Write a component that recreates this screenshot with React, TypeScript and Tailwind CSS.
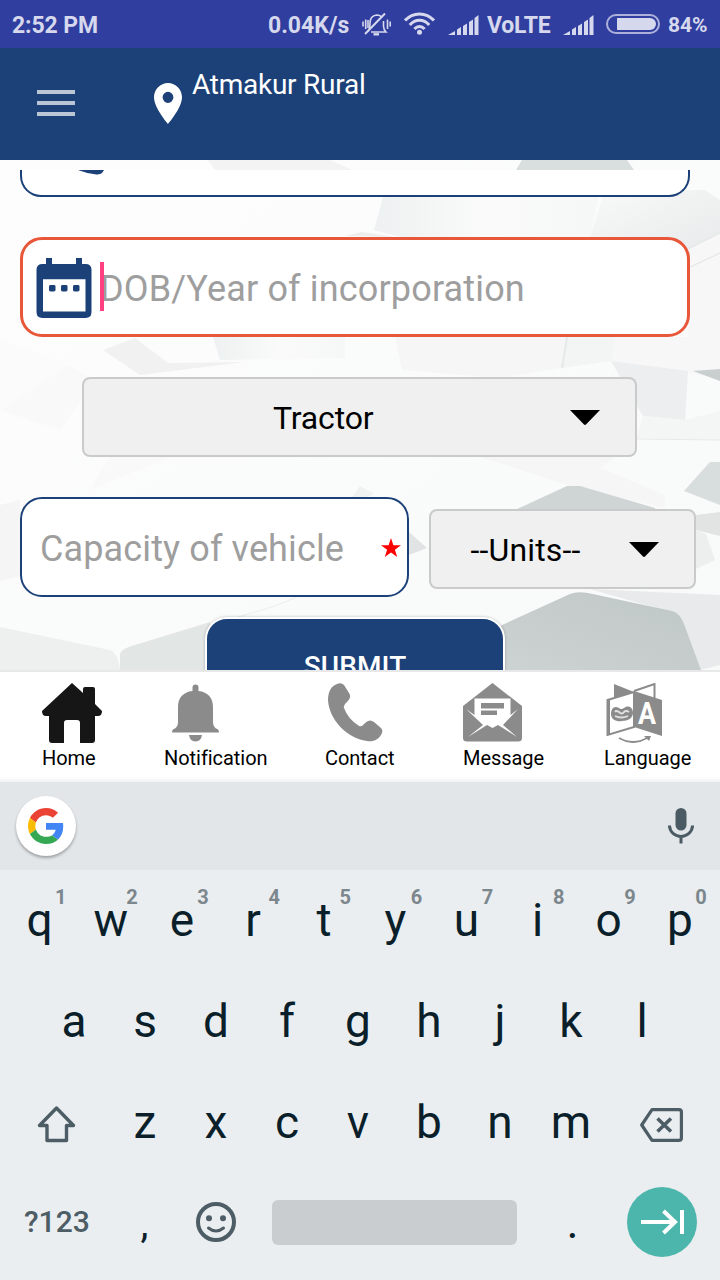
import React from "react";

type Digit = { k: string; n: string };

const topRow: Digit[] = "qwertyuiop".split("").map((k, i) => ({ k, n: String((i + 1) % 10) }));
const midRow = "asdfghjkl".split("");
const lowRow = "zxcvbnm".split("");

function Signal() {
  return (
    <svg className="block h-[20px] w-[31px]" viewBox="0 0 31 20" fill="#d6d8ed">
      <path d="M0 20 L7 16 V20z M9 14.5 l4-2.5 V20H9z M15 11 l4-2.5 V20h-4z M21 7 l4-2.5 V20h-4z M26.500 3 l4-3 V20h-4z" />
    </svg>
  );
}

function StatusBar() {
  return (
    <div className="flex h-[48px] shrink-0 items-center bg-[#303e9f] pt-[2px] pl-[12px] text-[23px] font-bold leading-none text-[#d6d8ed]">
      <span className="w-[256px] whitespace-nowrap tracking-[-0.1px]">2:52 PM</span>
      <span className="w-[94px] whitespace-nowrap">0.04K/s</span>
      <svg className="-mt-[3px] h-[24px] w-[29px] shrink-0" viewBox="0 0 29 24" fill="none" stroke="#d6d8ed" strokeWidth="1.6">
        <path d="M6 19.500 C8 17 8 15 8 11 C8 6 10 3.800 14.500 3 C17 3 19 3.800 20 5.500 M21.500 9 V14 C21.500 17 22 18 24 20 H9" />
        <path d="M3 22 L23 1.500" strokeWidth="2" />
        <path d="M11.500 22.300 H17" strokeWidth="2.400" />
        <path d="M1 9.500 V14.500 M3.700 7.500 V17 M25.500 7.500 V17 M28.200 9.500 V14.500 M6 8 V16" />
      </svg>
      <svg className="ml-[13px] -mt-[4px] h-[23px] w-[31px] shrink-0" viewBox="0 0 31 23" fill="none" stroke="#d6d8ed" strokeWidth="3">
        <path d="M1 8.500 C9 -0.300 22 -0.300 30 8.500" />
        <path d="M5.800 13 C11.500 6.800 19.500 6.800 25.200 13" />
        <path d="M10.400 17 C13.500 13.800 17.500 13.800 20.600 17" />
        <circle cx="15.500" cy="20.300" r="2.500" fill="#d6d8ed" stroke="none" />
      </svg>
      <span className="-mt-px ml-[13px] shrink-0"><Signal /></span>
      <span className="ml-[8px] w-[69px] whitespace-nowrap tracking-[-0.2px]">VoLTE</span>
      <span className="-mt-px ml-[7px] shrink-0"><Signal /></span>
      <div className="-mt-[2px] ml-[12px] flex h-[20px] w-[54px] shrink-0 rounded-full border-2 border-[#aeb2db] p-[2px] pl-[9px]">
        <div className="h-full w-full rounded-r-full bg-[#d6d8ed]" />
      </div>
      <span className="ml-[8px] whitespace-nowrap text-[21px]">84%</span>
    </div>
  );
}

function Header() {
  return (
    <div className="flex h-[112px] shrink-0 items-start bg-[#1b4178] pl-[37px]">
      <div className="mt-[42px] flex w-[38px] flex-col gap-[7px]">
        <div className="h-[4px] bg-[#bac5d6]" />
        <div className="h-[4px] bg-[#bac5d6]" />
        <div className="h-[4px] bg-[#bac5d6]" />
      </div>
      <svg className="ml-[79px] mt-[35px] h-[41px] w-[28px]" viewBox="5 2 14 20" preserveAspectRatio="none" fill="#fff">
        <path d="M12 2C8.130 2 5 5.130 5 9c0 5.250 7 13 7 13s7-7.750 7-13c0-3.870-3.130-7-7-7zm0 9.700a2.700 2.700 0 1 1 0-5.400 2.700 2.700 0 0 1 0 5.400z" />
      </svg>
      <span className="ml-[10px] mt-[23px] whitespace-nowrap text-[28px] leading-[28px] tracking-[-0.25px] text-white">Atmakur Rural</span>
    </div>
  );
}

function Backdrop() {
  return (
    <svg className="absolute inset-0 h-[510px] w-[720px]" viewBox="0 160 720 510">
      <defs>
        <linearGradient id="base" x1="0" y1="0" x2="1" y2="1">
          <stop offset="0" stopColor="#fdfdfd" />
          <stop offset="1" stopColor="#f8f9f9" />
        </linearGradient>
        <linearGradient id="fade" x1="0" y1="0" x2="1" y2="0">
          <stop offset="0" stopColor="#eef1f1" />
          <stop offset="0.500" stopColor="#fafafa" />
          <stop offset="1" stopColor="#f6f7f7" />
        </linearGradient>
        <linearGradient id="rise" x1="0" y1="0" x2="1" y2="1">
          <stop offset="0" stopColor="#f8f9f9" />
          <stop offset="1" stopColor="#e8ebeb" />
        </linearGradient>
        <linearGradient id="stone" x1="1" y1="0" x2="0" y2="1">
          <stop offset="0" stopColor="#bfc7c6" />
          <stop offset="1" stopColor="#cdd2d2" />
        </linearGradient>
      </defs>
      <rect y="160" width="720" height="510" fill="url(#base)" />
      <path d="M208 160H330L352 170H215z" fill="#f3f3f3" />
      <path d="M522 160H627L634 170H516z" fill="#d9dfde" />
      <path d="M385 190H600L590 237H400L374 230z" fill="url(#fade)" />
      <path d="M605 190L705 190L720 200V233L688 249L590 237z" fill="url(#rise)" />
      <path d="M688 249L720 233V253L688 267z" fill="#f7f7f7" />
      <path d="M688 267L720 253V378L611 361L615 337H688z" fill="#f7f7f7" />
      <path d="M688 249L720 233M688 268L720 253" stroke="#e0e3e3" />
      <path d="M345 236L362 232L395 237z" fill="#eceded" />
      <path d="M103 350L135 338L168 363L245 362L140 375z" fill="#f1f1f1" />
      <path d="M213 337L220 360L345 358V337z" fill="url(#fade)" />
      <path d="M395 337H567L562 368L500 378L402 370z" fill="#f6f6f6" />
      <path d="M567 337H615L611 361L562 368z" fill="#f3f4f4" />
      <path d="M567 337L562 368" stroke="#e6e9e9" strokeWidth="2" />
      <path d="M611 361L688 371L685 420L643 416z" fill="#eceeef" />
      <path d="M693 371L720 369V381z" fill="#c9cfcf" />
      <path d="M643 416L685 420L720 411V440L637 438z" fill="#f4f5f5" />
      <path d="M637 439L720 440" stroke="#e7e9e9" />
      <path d="M0 410L68 365L95 380L60 430z M110 457L170 457L90 490z" fill="#f9f9f9" />
      <path d="M0 340L68 365L0 411z" fill="#fbfbfb" />
      <path d="M480 457L637 440L600 468L665 495V508L570 486z" fill="#f6f6f6" />
      <path d="M710 462H720V505L684 491z" fill="#d8dddd" />
      <path d="M515 510L567 486L580 486L655 508V515H515z" fill="#cfd5d5" />
      <path d="M696 515L720 512V536L696 530z" fill="#e2e4e3" />
      <path d="M696 530L706 534L715 560L696 569z" fill="#edefef" />
      <path d="M409 532L427 548L409 555z" fill="#e1e4e4" />
      <path d="M360 486L374 494L368 497H352z" fill="#f0f2f2" />
      <path d="M0 505L20 500V576L0 581z" fill="#f5f5f5" />
      <path d="M590 589L720 595V665L700 670L660 609z" fill="#e8eaeb" />
      <path d="M500 626L570 594Q577 591 588 593L672 611Q680 613 684 624L701 670H500z" fill="url(#stone)" />
      <path d="M0 627L110 650Q118 653 120 670H0z" fill="#eeefef" />
      <path d="M120 670V656Q119 649 135 645L210 622V670z" fill="#e2e6e4" />
      <path d="M238 617L272 607L297 597" stroke="#ededed" fill="none" />
    </svg>
  );
}

function Caret() {
  return (
    <svg className="h-[15px] w-[30px] shrink-0" viewBox="0 0 30 15">
      <path d="M0 0H30L16 14.600Q15 15.400 14 14.600z" fill="#000" />
    </svg>
  );
}

function Form() {
  return (
    <div className="relative h-[510px] shrink-0 overflow-hidden">
      <Backdrop />
      <div className="relative flex flex-col pt-[10px] pl-[20px]">
        <div className="h-[27px] w-[670px] overflow-hidden rounded-b-[21px] border-2 border-t-0 border-[#1b4178] bg-white pl-[56px]">
          <svg className="h-[5px] w-[27px]" viewBox="0 0 27 5">
            <path d="M0 0H26L24 3Q22 5 17 4.300Q9 3.500 0 0z" fill="#1b4178" />
          </svg>
        </div>
        <div className="relative mt-[40px] flex h-[100px] w-[670px] items-center rounded-[22px] border-[3px] border-[#e8573a] bg-white pl-[13px]">
          <svg className="mt-px h-[60px] w-[56px] shrink-0" viewBox="-0.5 0 56 61" preserveAspectRatio="none">
            <path fillRule="evenodd" fill="#1b4178" d="M9.500 0H15.500V6H39.500V0H45.500V6H49Q55 6 55 12V55Q55 61 49 61H6Q0 61 0 55V12Q0 6 6 6H9.500z M6.500 21.500V54.500H49V21.500z" />
            <g fill="#1b4178">
              <rect x="12.500" y="27.500" width="6.500" height="6.500" rx="1.500" />
              <rect x="24.500" y="27.500" width="6.500" height="6.500" rx="1.500" />
              <rect x="36.500" y="27.500" width="6.500" height="6.500" rx="1.500" />
            </g>
          </svg>
          <span className="ml-[8px] mt-[3px] whitespace-nowrap text-[36px] leading-none tracking-[0.16px] text-[#9e9e9e]">DOB/Year of incorporation</span>
          <div className="absolute left-[77px] top-[22px] h-[49px] w-[4px] bg-[#ff4081]" />
        </div>
        <div className="ml-[62px] mt-[40px] flex h-[80px] w-[555px] items-center rounded-[8px] border-2 border-[#cacaca] bg-[#f0f0f0]">
          <span className="ml-[189px] mt-[2px] w-[297px] text-[32px] leading-none tracking-[-0.15px] text-black">Tractor</span>
          <Caret />
        </div>
        <div className="mt-[40px] flex items-start">
          <div className="flex h-[100px] w-[389px] items-center rounded-[22px] border-2 border-[#1b4178] bg-white">
            <span className="ml-[18px] mt-[3px] w-[341px] whitespace-nowrap text-[36px] leading-none tracking-[0.12px] text-[#9e9e9e]">Capacity of vehicle</span>
            <svg className="mt-px h-[19px] w-[20px] shrink-0" viewBox="0 0 20 19">
              <path d="M10 0L12.400 7.200H20L13.900 11.700L16.200 19L10 14.600L3.800 19L6.100 11.700L0 7.200H7.600z" fill="#f00" />
            </svg>
          </div>
          <div className="ml-[20px] mt-[12px] flex h-[80px] w-[267px] items-center rounded-[8px] border-2 border-[#cacaca] bg-[#f0f0f0]">
            <span className="ml-[39.500px] mt-[2px] w-[158.500px] whitespace-nowrap text-[32px] leading-none tracking-[0.15px] text-black">--Units--</span>
            <Caret />
          </div>
        </div>
        <div className="ml-[185px] mt-[20px] flex h-[100px] w-[300px] items-center justify-center rounded-[22px] border-2 border-white bg-[#1b4178] shadow-[0_0_3px_rgba(0,0,0,0.25)]">
          <span className="text-[28px] font-medium leading-none tracking-[0.1px] text-white">SUBMIT</span>
        </div>
      </div>
    </div>
  );
}

function NavItem({ label, className, children }: { label: string; className: string; children: React.ReactNode }) {
  return (
    <div className={"flex flex-col items-start " + className}>
      <div className="h-[60px]">{children}</div>
      <span className="mt-[5px] whitespace-nowrap text-[20px] leading-[20px] tracking-[-0.05px] text-black">{label}</span>
    </div>
  );
}

function NavBar() {
  return (
    <div className="flex h-[112px] shrink-0 border-t-2 border-[#e8e8e8] bg-gradient-to-b from-white from-95% to-[#f2f2f2] pl-[42px] pt-[11px]">
      <NavItem label="Home" className="w-[122px]">
        <svg className="h-[60px] w-[60px]" viewBox="0 0 60 60" fill="#161616">
          <path d="M30 0L41 10V6Q41 4 43 4H51Q53 4 53 6V21L60 28Q60 33 56 33H53V57Q53 60 50 60H38V40Q38 37 35 37H25Q22 37 22 40V60H10Q7 60 7 57V33H4Q0 33 0 28z" />
        </svg>
      </NavItem>
      <NavItem label="Notification" className="w-[161px]">
        <svg className="ml-[8px] h-[60px] w-[47px]" viewBox="0 0 47 60" fill="#8b8b8b">
          <path d="M20.500 8V4.500Q20.500 1.500 23.500 1.500Q26.500 1.500 26.500 4.500V8C36 9 41 15 41 24V39Q41 43 44 45.500Q47 46 47 49.500H0Q0 46 3 45.500Q6 43 6 39V24C6 15 11 9 20.500 8z" />
          <path d="M17 52H30Q29 58.500 23.500 58.500Q18 58.500 17 52z" />
        </svg>
      </NavItem>
      <NavItem label="Contact" className="w-[138px]">
        <svg className="ml-[3px] h-[60px] w-[55px]" viewBox="0 0 55 60" fill="#8b8b8b">
          <path d="M9 1Q13-1 16 2L21 10Q24 15 19 19Q15 22 16 25Q20 36 31 43Q34 44 36 41Q41 35 46 39L53 45Q55 47 54 50C51 57 45 59 39 58C18 55 1 36 0 17C0 9 3 3 9 1z" />
        </svg>
      </NavItem>
      <NavItem label="Message" className="w-[141px]">
        <svg className="h-[60px] w-[59px]" viewBox="0 0 59 60">
          <path d="M29.500 0L59 23V55Q59 58.500 55 58.500H4Q0 58.500 0 55V23z" fill="#8b8b8b" />
          <path d="M11.500 15.500H47.500V32L55 26L40 42L54 54L35 42L29.500 45L24 42L5 54L20 42L3 26L11.500 32z" fill="#fff" />
          <path d="M18 20H41V25.500H18z M18 27.500H34V32H18z" fill="#8b8b8b" />
        </svg>
      </NavItem>
      <NavItem label="Language" className="w-[100px]">
        <svg className="ml-[2px] h-[60px] w-[57px]" viewBox="0 0 57 60">
          <path d="M8 1L28 9V18L8 16z" fill="#8b8b8b" />
          <path d="M28 8L48.500 1V15" fill="none" stroke="#8b8b8b" strokeWidth="2" />
          <path d="M1.500 17L28 9V44L1.500 52z" fill="#fff" stroke="#8b8b8b" strokeWidth="2" />
          <path d="M2.500 16V52" stroke="#8b8b8b" strokeWidth="3" />
          <path d="M28 8L56 17V53L28 44z" fill="#8b8b8b" />
          <text x="32" y="41" fill="#fff" fontFamily="Roboto, sans-serif" fontWeight="700" fontSize="31" textLength="18" lengthAdjust="spacingAndGlyphs">A</text>
          <path d="M13 25C8 22 5 26 5 31C5 37 11 39 16 38C22 38 27 35 27 30C27 24 22 22 18 25Q15 27 13 25z" fill="#8b8b8b" />
          <path d="M9 29Q10 27 13 29Q16 32 18 29Q20 27 23 29M9 33Q15 36 22 33" fill="none" stroke="#e0e0e0" strokeWidth="1.800" />
          <path d="M13 55Q27 63 41 55" fill="none" stroke="#8b8b8b" strokeWidth="2" />
          <path d="M38 53L45 53L43 58z" fill="#8b8b8b" />
        </svg>
      </NavItem>
    </div>
  );
}

function Key({ children }: { children: React.ReactNode }) {
  return <div className="relative flex h-full w-[71px] shrink-0 items-center justify-center">{children}</div>;
}

function Keyboard() {
  return (
    <div className="flex h-[498px] shrink-0 flex-col bg-[#ebeef1]">
      <div className="flex h-[88px] shrink-0 items-center justify-between bg-[#e2e6e9] pl-[16px] pr-[26px]">
        <div className="flex h-[60px] w-[60px] items-center justify-center rounded-full bg-white shadow-[0_2px_3px_rgba(0,0,0,0.3)]">
          <svg className="h-[36px] w-[36px]" viewBox="0 0 48 48">
            <path fill="#ea4335" d="M24 9.500c3.540 0 6.710 1.220 9.210 3.600l6.850-6.850C35.900 2.380 30.470 0 24 0 14.620 0 6.510 5.380 2.560 13.220l7.980 6.190C12.430 13.720 17.740 9.500 24 9.500z" />
            <path fill="#4285f4" d="M46.980 24.550c0-1.570-.15-3.090-.38-4.550H24v9.020h12.940c-.58 2.960-2.260 5.480-4.780 7.180l7.730 6c4.510-4.180 7.090-10.360 7.090-17.650z" />
            <path fill="#fbbc05" d="M10.530 28.590c-.48-1.450-.76-2.990-.76-4.590s.27-3.140.76-4.590l-7.980-6.190C.920 16.460 0 20.120 0 24c0 3.880.92 7.540 2.560 10.780l7.970-6.190z" />
            <path fill="#34a853" d="M24 48c6.480 0 11.930-2.130 15.890-5.810l-7.730-6c-2.150 1.450-4.920 2.300-8.160 2.300-6.260 0-11.570-4.220-13.470-9.910l-7.980 6.190C6.510 42.620 14.620 48 24 48z" />
          </svg>
        </div>
        <svg className="h-[36px] w-[26px]" viewBox="0 0 26 36">
          <rect x="7.500" y="0" width="11" height="22.500" rx="5.500" fill="#4a5b63" />
          <path d="M1.400 17.500C2.500 32 23.500 32 24.600 17.500M13 28V35.500" fill="none" stroke="#4a5b63" strokeWidth="3" />
        </svg>
      </div>
      <div className="flex flex-col text-[46px] leading-none text-[#0a1f2a]">
        <div className="flex h-[100px] pl-[4px]">
          {topRow.map(({ k, n }) => (
            <div key={k} className="relative flex h-full w-[71.150px] shrink-0 items-center justify-center">
              {k}
              <span className="absolute left-[51px] top-[17px] text-[20px] font-bold leading-[20px] text-[#7c878d]">{n}</span>
            </div>
          ))}
        </div>
        <div className="flex h-[101px] pl-[38.500px]">
          {midRow.map((k) => (
            <Key key={k}>{k}</Key>
          ))}
        </div>
        <div className="flex h-[102px] items-center">
          <div className="flex w-[109.500px] justify-center pl-[3px]">
            <svg className="mt-[3px] h-[38px] w-[40px]" viewBox="0 0 40 38" fill="none" stroke="#4d5d66" strokeWidth="3.400" strokeLinejoin="round">
              <path d="M20.500 3L37.500 20.500H30.500V35.500H11V20.500H3.500z" />
            </svg>
          </div>
          {lowRow.map((k) => (
            <Key key={k}>{k}</Key>
          ))}
          <svg className="ml-[33.500px] mt-[6px] h-[34px] w-[43px]" viewBox="0 0 43 34" fill="none" stroke="#4d5d66" strokeWidth="3.200" strokeLinejoin="round">
            <path d="M12 1.700H39Q41.400 1.700 41.400 4V30Q41.400 32.300 39 32.300H12L1.700 17z" />
            <path d="M17.500 10.500L31 23.500M31 10.500L17.500 23.500" strokeWidth="3.600" />
          </svg>
        </div>
        <div className="flex h-[98px] items-center">
          <span className="ml-[24px] w-[85px] text-[30px] font-medium leading-none text-[#4d5d66]">?123</span>
          <Key><span className="mt-[3px] text-[40px] leading-none">,</span></Key>
          <Key>
            <svg className="h-[40px] w-[40px]" viewBox="0 0 40 40" fill="none" stroke="#4d5d66">
              <circle cx="20" cy="20" r="18" strokeWidth="4" />
              <circle cx="13" cy="16.200" r="3" fill="#4d5d66" stroke="none" />
              <circle cx="27" cy="16.200" r="3" fill="#4d5d66" stroke="none" />
              <path d="M12.500 26Q20 32 27.500 26" strokeWidth="3" strokeLinecap="round" />
            </svg>
          </Key>
          <div className="ml-[21px] mt-px h-[45px] w-[245px] rounded-[6px] bg-[#c9cdd0]" />
          <div className="ml-[20px]"><Key>.</Key></div>
          <div className="ml-[19px] flex h-[70px] w-[70px] items-center justify-center rounded-full bg-[#4db6ac]">
            <svg className="h-[26px] w-[43px]" viewBox="0 0 43 26" fill="none" stroke="#fff" strokeWidth="4">
              <path d="M0 13H34M22.500 2L34 13L22.500 24M41 1V25" />
            </svg>
          </div>
        </div>
      </div>
    </div>
  );
}

export default function App() {
  return (
    <div className="flex h-[1280px] w-[720px] flex-col overflow-hidden font-['Roboto',sans-serif]">
      <StatusBar />
      <Header />
      <Form />
      <NavBar />
      <Keyboard />
    </div>
  );
}
